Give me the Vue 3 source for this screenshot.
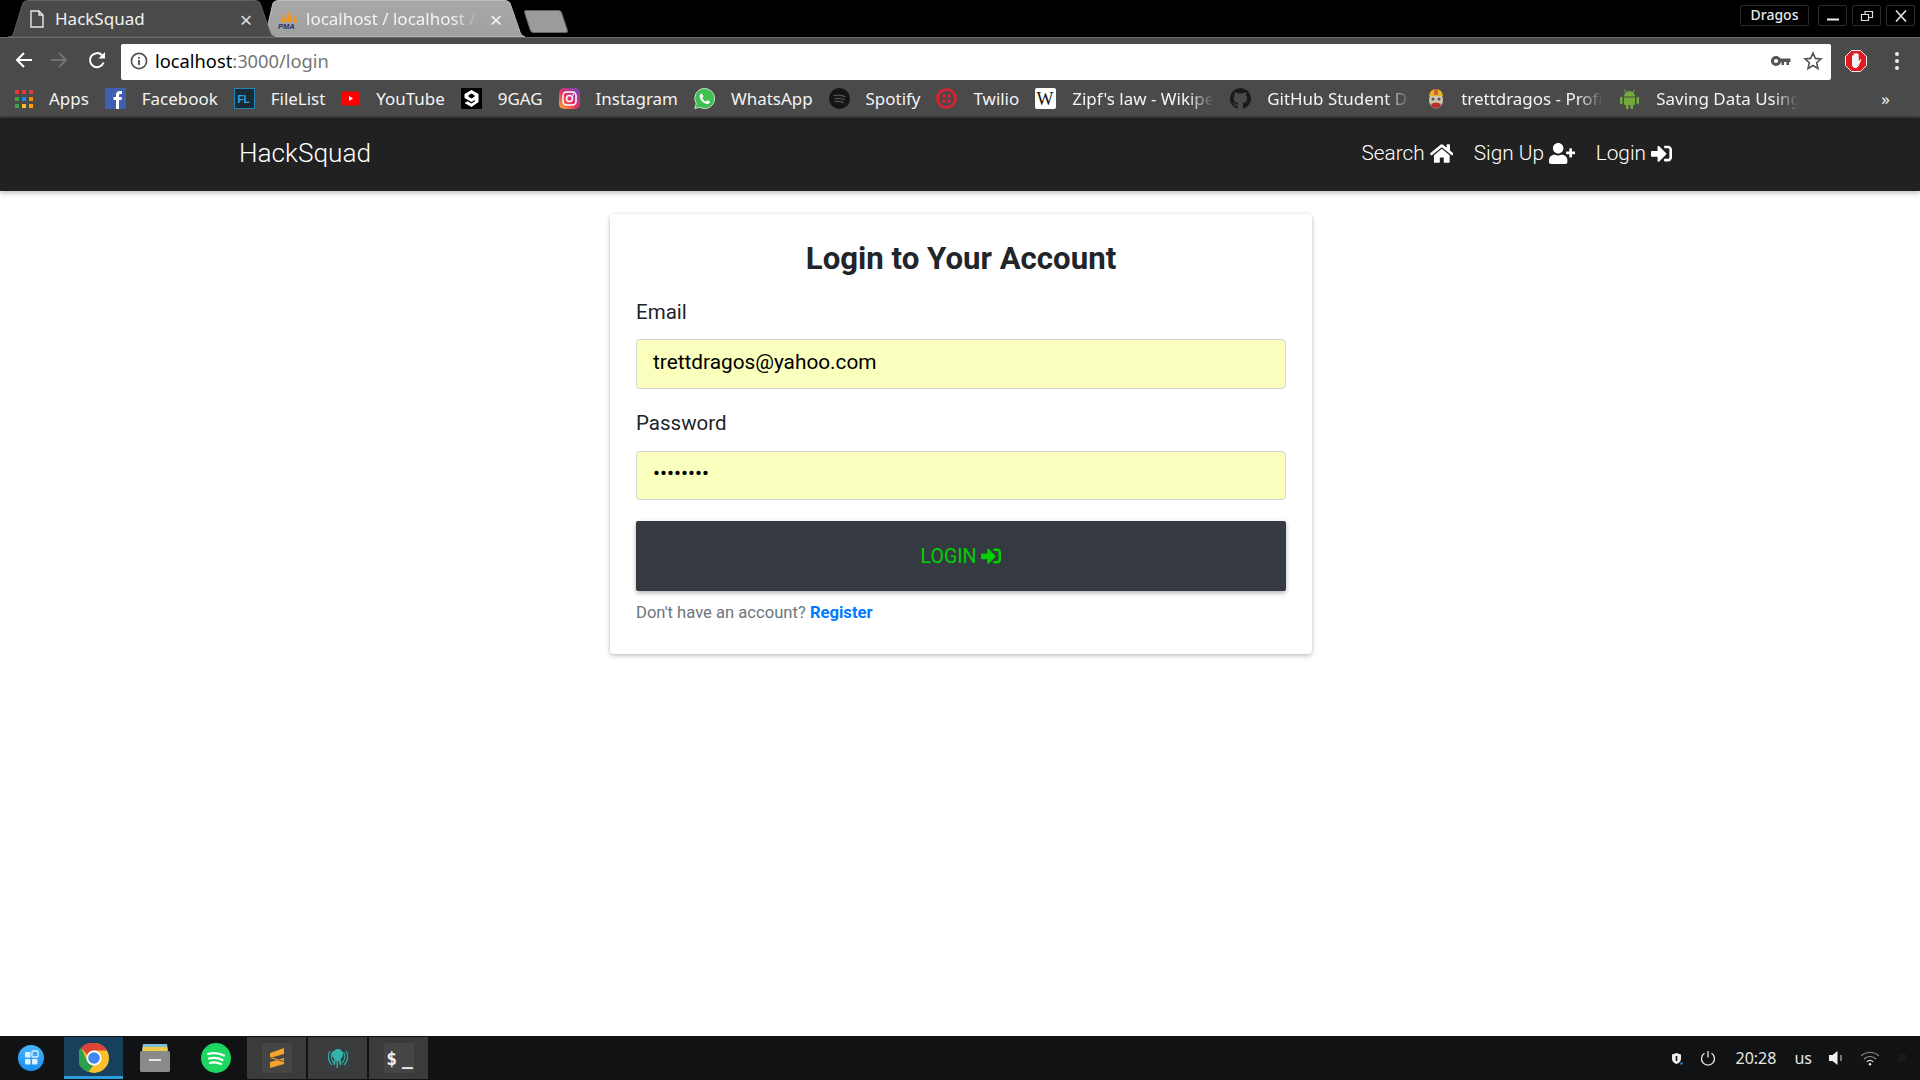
<script setup>
const homePath = 'M280.37 148.26L96 300.11V464a16 16 0 0 0 16 16l112.06-.29a16 16 0 0 0 15.92-16V368a16 16 0 0 1 16-16h64a16 16 0 0 1 16 16v95.64a16 16 0 0 0 16 16.05L464 480a16 16 0 0 0 16-16V300L295.67 148.26a12.19 12.19 0 0 0-15.3 0zM571.6 251.47L488 182.56V44.05a12 12 0 0 0-12-12h-56a12 12 0 0 0-12 12v72.61L318.47 43a48 48 0 0 0-61 0L4.34 251.47a12 12 0 0 0-1.6 16.9l25.5 31A12 12 0 0 0 45.15 301l235.22-193.74a12.19 12.19 0 0 1 15.3 0L530.9 301a12 12 0 0 0 16.9-1.6l25.5-31a12 12 0 0 0-1.7-16.93z'
const userPlusPath = 'M624 208h-64v-64c0-8.8-7.2-16-16-16h-32c-8.8 0-16 7.2-16 16v64h-64c-8.8 0-16 7.2-16 16v32c0 8.8 7.2 16 16 16h64v64c0 8.8 7.2 16 16 16h32c8.8 0 16-7.2 16-16v-64h64c8.8 0 16-7.2 16-16v-32c0-8.8-7.2-16-16-16zm-400 48c70.7 0 128-57.3 128-128S294.7 0 224 0 96 57.3 96 128s57.3 128 128 128zm89.6 32h-16.7c-22.2 10.2-46.9 16-72.9 16s-50.6-5.8-72.9-16h-16.7C60.2 288 0 348.2 0 422.4V464c0 26.5 21.5 48 48 48h352c26.5 0 48-21.5 48-48v-41.6c0-74.2-60.2-134.4-134.4-134.4z'
const signInPath = 'M416 448h-84c-6.6 0-12-5.4-12-12v-40c0-6.6 5.4-12 12-12h84c17.7 0 32-14.3 32-32V160c0-17.7-14.3-32-32-32h-84c-6.6 0-12-5.4-12-12V76c0-6.6 5.4-12 12-12h84c53 0 96 43 96 96v192c0 53-43 96-96 96zm-47-201L201 79c-15-15-41-4.5-41 17v96H24c-13.3 0-24 10.7-24 24v96c0 13.3 10.7 24 24 24h136v96c0 21.5 26 32 41 17l168-168c9.3-9.4 9.3-24.6 0-34z'
const appDots = [
  ['#e53935', 0, 0], ['#e53935', 7, 0], ['#e53935', 14, 0],
  ['#43a047', 0, 7], ['#1e88e5', 7, 7], ['#fb8c00', 14, 7],
  ['#43a047', 0, 14], ['#fbc02d', 7, 14], ['#ffa000', 14, 14],
]
</script>

<template>
  <div class="screen">
    <header class="chrome">
      <div class="tabstrip">
        <div class="tab tab-active">
          <svg class="tab-shape" viewBox="0 0 267 37" preserveAspectRatio="none">
            <path d="M0 37C4 37 5 35 6 32L15 3Q16 1 20 .5L247 .5Q251 1 252 3L262 32Q263 36 267 37Z" fill="#4a4a4a" stroke="#626262" />
          </svg>
          <svg class="tab-file" viewBox="0 0 14 18" width="14" height="18">
            <path d="M1 1h8l4 4v12H1zM9 1v4h4" fill="none" stroke="#e8e8e8" stroke-width="1.4" />
          </svg>
          <span class="tab-title">HackSquad</span>
          <span class="tab-close">×</span>
        </div>
        <div class="tab tab-inactive">
          <svg class="tab-shape" viewBox="0 0 265 37" preserveAspectRatio="none">
            <defs>
              <linearGradient id="inactiveTab" x1="0" y1="0" x2="0" y2="1">
                <stop offset="0" stop-color="#a8a8a8" />
                <stop offset="1" stop-color="#a0a0a0" />
              </linearGradient>
            </defs>
            <path d="M5 37L13 3Q14 1 18 .5L245 .5Q249 1 250 3L260 32Q261 36 265 37Z" fill="url(#inactiveTab)" stroke="#bcbcbc" />
          </svg>
          <svg class="tab-pma" viewBox="0 0 22 22" width="22" height="22">
            <path d="M2 14L7 5v9zM8 14l3-12 3 12zM15 5l5 9h-5z" fill="#f39a1d" />
            <text x="0" y="21" class="pma-text">PMA</text>
          </svg>
          <span class="tab-title tab-title-fade">localhost / localhost /</span>
          <span class="tab-close">×</span>
        </div>
        <div class="newtab"></div>
        <div class="window-controls">
          <span class="win-user">Dragos</span>
          <span class="win-btn">
            <svg viewBox="0 0 16 16" width="16" height="16"><path d="M2 11.5h12" stroke="#eee" stroke-width="2" /></svg>
          </span>
          <span class="win-btn">
            <svg viewBox="0 0 16 16" width="16" height="16"><path d="M2.5 6.5h7v6h-7zM6 6V3.5h7.5v6H10" fill="none" stroke="#ddd" stroke-width="1.2" /></svg>
          </span>
          <span class="win-btn">
            <svg viewBox="0 0 16 16" width="16" height="16"><path d="M3 2.5l10 11M13 2.5l-10 11" stroke="#eee" stroke-width="1.5" /></svg>
          </span>
        </div>
      </div>

      <div class="toolbar">
        <svg class="tool" viewBox="0 0 18 18" width="18" height="18"><path d="M17 9H2M9 2L2 9l7 7" fill="none" stroke="#fff" stroke-width="2" /></svg>
        <svg class="tool" viewBox="0 0 18 18" width="18" height="18"><path d="M1 9h15M9 2l7 7-7 7" fill="none" stroke="#727272" stroke-width="2" /></svg>
        <svg class="tool" viewBox="0 0 18 18" width="18" height="18"><path d="M15.6 11.5A7 7 0 1 1 14 4.2" fill="none" stroke="#fff" stroke-width="2" /><path d="M10.5 7.5H17V1z" fill="#fff" /></svg>
        <div class="omnibox">
          <svg viewBox="0 0 18 18" width="18" height="18">
            <circle cx="9" cy="9" r="7.6" fill="none" stroke="#555" stroke-width="1.7" />
            <path d="M9 8v5M9 5v1.7" stroke="#555" stroke-width="1.9" />
          </svg>
          <span class="url"><span class="url-host">localhost</span>:3000/login</span>
          <span class="omni-spacer"></span>
          <svg viewBox="0 0 20 12" width="20" height="12">
            <circle cx="5" cy="6" r="3.6" fill="none" stroke="#555" stroke-width="3" />
            <path d="M8 3.500h11.500v3.500H18V10h-2.500V7H13v3h-2.500V7H8z" fill="#555" />
          </svg>
          <svg class="star" viewBox="0 0 20 20" width="20" height="20">
            <path d="M10 2l2.3 5.4 5.7.5-4.3 3.8 1.3 5.8-5-3-5 3 1.3-5.8L2 7.900l5.700-.5z" fill="none" stroke="#555" stroke-width="1.6" />
          </svg>
        </div>
        <svg class="abp" viewBox="0 0 22 22" width="22" height="22">
          <path d="M6.500 .5h9l6 6v9l-6 6h-9l-6-6v-9z" fill="#e01b22" stroke="#f0f0f0" />
          <path d="M7 9.500V5.800a.9.900 0 0 1 1.600 0V10V3.900a.9.900 0 0 1 1.700 0V10V3.500a.9.900 0 0 1 1.700 0V10V4.200a.9.900 0 0 1 1.700 0V11l1.300-1.500c.8-.6 1.500 0 1 .9L13.500 16c-.8 1.600-1.800 2-3.200 2-2 0-3.300-1.200-3.300-3.500z" fill="#f2f2f2" />
        </svg>
        <svg class="menu-dots" viewBox="0 0 6 20" width="6" height="20">
          <circle cx="3" cy="3" r="2" fill="#eee" /><circle cx="3" cy="10" r="2" fill="#eee" /><circle cx="3" cy="17" r="2" fill="#eee" />
        </svg>
      </div>

      <nav class="bookmarks">
        <a class="bm bm-apps">
          <svg viewBox="0 0 18 18" width="18" height="18">
            <rect v-for="(d, i) in appDots" :key="i" :x="d[1]" :y="d[2]" width="4" height="4" :fill="d[0]" />
          </svg>
          <span>Apps</span>
        </a>
        <a class="bm">
          <svg viewBox="0 0 21 21" width="21" height="21">
            <rect width="21" height="21" fill="#3f5fb0" />
            <path d="M11 21v-9H8.500V9H11V7c0-2.500 1.500-4 3.800-4H17v3h-1.500c-1 0-1.500.5-1.500 1.500V9h3l-.5 3H14v9z" fill="#fff" />
          </svg>
          <span>Facebook</span>
        </a>
        <a class="bm">
          <svg viewBox="0 0 21 21" width="21" height="21">
            <rect x=".5" y=".5" width="20" height="20" fill="#1c2b33" stroke="#2087b8" />
            <text x="3.500" y="14.500" class="fl-text">FL</text>
          </svg>
          <span>FileList</span>
        </a>
        <a class="bm">
          <svg viewBox="0 0 19 21" width="19" height="21">
            <rect y="3.500" width="19" height="14" rx="3.500" fill="#f00" />
            <path d="M8 8l4 2.500L8 13z" fill="#fff" />
          </svg>
          <span>YouTube</span>
        </a>
        <a class="bm">
          <svg viewBox="0 0 21 21" width="21" height="21">
            <rect width="21" height="21" rx="1" fill="#000" />
            <path d="M10.500 2l7 4v8l-7 5-7-4 3-1.700 4 2.300 3.500-2.300v-1.300l-3.500 2-7-4V6zM10.500 5.500L7.500 7.200v1.600l3 1.700 3-1.700V7.200z" fill="#fff" fill-rule="evenodd" />
          </svg>
          <span>9GAG</span>
        </a>
        <a class="bm">
          <svg viewBox="0 0 21 21" width="21" height="21">
            <defs>
              <linearGradient id="instaGrad" x1="0" y1="1" x2="1" y2="0">
                <stop offset="0" stop-color="#fdb43a" />
                <stop offset=".45" stop-color="#e8305f" />
                <stop offset="1" stop-color="#6a49c8" />
              </linearGradient>
            </defs>
            <rect width="21" height="21" rx="5" fill="url(#instaGrad)" />
            <rect x="4" y="4" width="13" height="13" rx="3.500" fill="none" stroke="#fff" stroke-width="1.500" />
            <circle cx="10.500" cy="10.500" r="3" fill="none" stroke="#fff" stroke-width="1.500" />
            <circle cx="14.300" cy="6.700" r=".9" fill="#fff" />
          </svg>
          <span>Instagram</span>
        </a>
        <a class="bm">
          <svg viewBox="0 0 21 21" width="21" height="21">
            <path d="M10.700 .5a10 10 0 0 0-8.500 15.300L.8 20.500l4.900-1.300A10 10 0 1 0 10.700 .5z" fill="#3fc04f" stroke="#e9f5e9" stroke-width=".8" />
            <path d="M7.300 5.500c-.6 0-1.600 1-1.600 2.700 0 3.500 4.300 7.800 7.600 7.800 1.800 0 2.800-1.200 2.800-2 0-.5-2.300-1.700-2.700-1.700-.4 0-.9 1.200-1.400 1.200-1.200 0-3.600-2.400-3.600-3.500 0-.5 1-1 1-1.500S8.200 5.500 7.300 5.500z" fill="#fff" />
          </svg>
          <span>WhatsApp</span>
        </a>
        <a class="bm">
          <svg viewBox="0 0 21 21" width="21" height="21">
            <circle cx="10.500" cy="10.500" r="10.500" fill="#151515" />
            <path d="M5 7.700c4-1 8-.7 11 1M5.700 10.800c3.500-.8 6.800-.5 9.500 1M6.300 13.700c3-.6 5.500-.4 7.800.9" fill="none" stroke="#555" stroke-width="1.300" stroke-linecap="round" />
          </svg>
          <span>Spotify</span>
        </a>
        <a class="bm">
          <svg viewBox="0 0 21 21" width="21" height="21">
            <circle cx="10.500" cy="10.500" r="9" fill="none" stroke="#e3202f" stroke-width="2.600" />
            <circle cx="8" cy="8" r="1.800" fill="#e3202f" /><circle cx="13" cy="8" r="1.800" fill="#e3202f" />
            <circle cx="8" cy="13" r="1.800" fill="#e3202f" /><circle cx="13" cy="13" r="1.800" fill="#e3202f" />
          </svg>
          <span>Twilio</span>
        </a>
        <a class="bm">
          <svg viewBox="0 0 21 21" width="21" height="21">
            <rect width="21" height="21" rx="2" fill="#fff" />
            <text x="1.500" y="17" class="wiki-text">W</text>
          </svg>
          <span class="fade bm-zipf">Zipf's law - Wikipe</span>
        </a>
        <a class="bm">
          <svg viewBox="0 0 21 21" width="21" height="21">
            <path d="M10.500 0a10.500 10.500 0 0 0-3.300 20.500c.5.100.7-.2.700-.5v-2c-2.900.6-3.500-1.300-3.500-1.300-.5-1.200-1.200-1.500-1.200-1.500-1-.6 0-.6 0-.6 1 .1 1.600 1.100 1.600 1.100.9 1.600 2.400 1.100 3 .9.100-.7.400-1.100.7-1.400-2.300-.3-4.800-1.200-4.800-5.200 0-1.100.4-2 1.100-2.800-.1-.3-.5-1.300.1-2.800 0 0 .9-.3 2.900 1.100a10 10 0 0 1 5.200 0c2-1.400 2.900-1.100 2.900-1.100.6 1.500.2 2.500.1 2.800.7.800 1.100 1.700 1.100 2.800 0 4-2.500 4.900-4.800 5.200.4.300.7 1 .7 1.900V20c0 .3.200.6.700.5A10.500 10.500 0 0 0 10.500 0z" fill="#1a1a1a" />
          </svg>
          <span class="fade bm-github">GitHub Student D</span>
        </a>
        <a class="bm">
          <svg viewBox="0 0 18 21" width="18" height="21">
            <ellipse cx="9" cy="12" rx="7" ry="8.500" fill="#cfc6ae" />
            <path d="M2 8a7 7 0 0 1 14 0z" fill="#e4b52c" />
            <rect x="7" y="1" width="4" height="6" fill="#d2632a" />
            <path d="M4 16q5-3 10 0l-1 3q-4 2-8 0z" fill="#b8312c" />
            <circle cx="6" cy="11" r="1.500" fill="#555" /><circle cx="12" cy="11" r="1.500" fill="#555" />
          </svg>
          <span class="fade bm-trett">trettdragos - Profi</span>
        </a>
        <a class="bm">
          <svg viewBox="0 0 21 21" width="21" height="21">
            <path d="M5 8.500a5.500 5.500 0 0 1 11 0zM5 9.500h11V16a1 1 0 0 1-1 1h-1v3a1 1 0 0 1-2.500 0v-3h-2v3A1 1 0 0 1 7 20v-3H6a1 1 0 0 1-1-1zM1 10a1.200 1.200 0 0 1 2.500 0v5A1.200 1.200 0 0 1 1 15zM17.500 10a1.200 1.200 0 0 1 2.500 0v5a1.200 1.200 0 0 1-2.500 0z" fill="#76a93c" />
            <path d="M7 4.500L5.500 1.500M14 4.500l1.500-3" stroke="#76a93c" stroke-width="1" />
          </svg>
          <span class="fade bm-saving">Saving Data Using</span>
        </a>
        <span class="bm-more">»</span>
      </nav>
    </header>

    <div class="navbar">
      <div class="navbar-inner">
        <a class="brand">HackSquad</a>
        <ul class="nav-links">
          <li>Search
            <svg viewBox="0 0 576 512" width="23.600" height="21"><path :d="homePath" fill="#fff" /></svg>
          </li>
          <li>Sign Up
            <svg viewBox="0 0 640 512" width="26.250" height="21"><path :d="userPlusPath" fill="#fff" /></svg>
          </li>
          <li>Login
            <svg viewBox="0 0 512 512" width="21" height="21"><path :d="signInPath" fill="#fff" /></svg>
          </li>
        </ul>
      </div>
    </div>

    <main class="page">
      <section class="card">
        <h1 class="card-title">Login to Your Account</h1>
        <div class="field-label">Email</div>
        <div class="field field-email">trettdragos@yahoo.com</div>
        <div class="field-label field-label-pass">Password</div>
        <div class="field field-pass">••••••••</div>
        <button class="login-btn">
          LOGIN
          <svg viewBox="0 0 512 512" width="20" height="20"><path :d="signInPath" fill="#00d000" /></svg>
        </button>
        <p class="register-line">Don't have an account? <a class="register">Register</a></p>
      </section>
    </main>

    <footer class="taskbar">
      <div class="task-launch">
        <svg viewBox="0 0 26 26" width="26" height="26">
          <defs>
            <linearGradient id="startGrad" x1="0" y1="0" x2="0" y2="1">
              <stop offset="0" stop-color="#45b6ff" />
              <stop offset="1" stop-color="#1a8cf0" />
            </linearGradient>
          </defs>
          <circle cx="13" cy="13" r="13" fill="url(#startGrad)" />
          <rect x="7" y="7" width="5.500" height="5.500" rx="1" fill="#dff1ff" />
          <rect x="14" y="6" width="6" height="6" rx="1" fill="none" stroke="#dff1ff" stroke-width="1.300" />
          <rect x="7" y="14" width="5.500" height="5.500" rx="1" fill="#dff1ff" />
          <rect x="14" y="14" width="5.500" height="5.500" rx="1" fill="#dff1ff" />
        </svg>
      </div>
      <div class="task-item task-active">
        <svg viewBox="0 0 30 30" width="30" height="30">
          <circle cx="15" cy="15" r="15" fill="#fbc02d" />
          <path d="M15 0a15 15 0 0 1 13 7.500H15A7.500 7.500 0 0 0 8 12L2 4.500A15 15 0 0 1 15 0z" fill="#db4437" />
          <path d="M2 4.500L8.500 18.800A7.500 7.500 0 0 0 14 22.500L9.500 29A15 15 0 0 1 2 4.500z" fill="#2e9e4f" />
          <circle cx="15" cy="15" r="7.500" fill="#fff" />
          <circle cx="15" cy="15" r="5.800" fill="#4285f4" />
        </svg>
      </div>
      <div class="task-item">
        <svg viewBox="0 0 30 28" width="30" height="28">
          <path d="M3 0h24l1 6H2z" fill="#7ec0d8" />
          <path d="M3 3h24l1 5H2z" fill="#f2c94c" />
          <rect y="7" width="30" height="21" rx="1.500" fill="#8a8a8a" />
          <rect x="9" y="15" width="12" height="2" fill="#e8e8e8" />
        </svg>
      </div>
      <div class="task-item">
        <svg viewBox="0 0 30 30" width="30" height="30">
          <circle cx="15" cy="15" r="15" fill="#1ed760" />
          <path d="M7 11c5-1.500 11-1 16 1.500M8 15.500c4.500-1.200 9.500-.8 13.500 1.500M9 20c3.500-1 7.500-.7 11 1" fill="none" stroke="#fff" stroke-width="2.200" stroke-linecap="round" />
        </svg>
      </div>
      <div class="task-item task-open">
        <span class="task-icon-box">
          <svg viewBox="0 0 20 22" width="20" height="22">
            <path d="M17 1v6L3 11V6zM3 11l14 4v-1l-14-4zM3 15l14-4v6L3 21z" fill="#f4a32c" />
          </svg>
        </span>
      </div>
      <div class="task-item task-open">
        <svg viewBox="0 0 30 30" width="30" height="30">
          <circle cx="15" cy="15" r="15" fill="#383e3f" />
          <path d="M15 6c3 0 5 2.500 5 5.500 0 2-1 3.500-2.500 4.500l1 6h-1.800l-.7-4-1 .2V25h-1.400v-6.800l-1-.2-.7 4H10.500l1-6C10 15 9 13.500 9 11.500 9 8.500 12 6 15 6z" fill="#32b3ad" />
          <path d="M7 8a11 11 0 0 0 2 14M23 8a11 11 0 0 1-2 14M9.500 9a9 9 0 0 0 1.500 11M20.500 9a9 9 0 0 1-1.500 11" fill="none" stroke="#32b3ad" stroke-width="1.200" />
        </svg>
      </div>
      <div class="task-item task-open">
        <span class="task-icon-box term-box">$_</span>
      </div>

      <div class="tray">
        <svg class="tray-shield" viewBox="0 0 12 13" width="12" height="13">
          <path d="M5.500 1l4.500 1.500V7c0 2.500-2 4-4.500 5C3 11 1 9.500 1 7V2.500z" fill="#eee" />
          <path d="M5.500 4v5" stroke="#111" stroke-width="1.600" />
          <circle cx="10.500" cy="11.500" r="1.200" fill="#2e88d8" />
        </svg>
        <svg class="tray-power" viewBox="0 0 16 16" width="16" height="16">
          <path d="M4.500 3.200a6.500 6.500 0 1 0 7 0M8 1v6.500" fill="none" stroke="#e8e8e8" stroke-width="1.300" />
        </svg>
        <span class="tray-time">20:28</span>
        <span class="tray-lang">us</span>
        <svg class="tray-vol" viewBox="0 0 15 16" width="15" height="16">
          <path d="M0 5h3.500L8.500 1v14l-5-4H0z" fill="#f0f0f0" />
          <path d="M12 5v6" stroke="#999" stroke-width="1.500" />
        </svg>
        <svg class="tray-wifi" viewBox="0 0 20 15" width="20" height="15">
          <path d="M1 5a13 13 0 0 1 18 0" fill="none" stroke="#777" stroke-width="1.100" />
          <path d="M4 8a8.500 8.500 0 0 1 12 0" fill="none" stroke="#999" stroke-width="1.100" />
          <path d="M6.800 10.800a4.500 4.500 0 0 1 6.400 0" fill="none" stroke="#ddd" stroke-width="1.200" />
          <circle cx="10" cy="13.300" r="1.200" fill="#eee" />
        </svg>
        <span class="tray-dim"></span>
      </div>
    </footer>
  </div>
</template>

<style>
html, body { margin: 0; padding: 0; background: #fff; }
</style>

<style scoped>
.screen {
  width: 1920px;
  height: 1080px;
  display: flex;
  flex-direction: column;
  overflow: hidden;
  background: #fff;
  font-family: Roboto, "Liberation Sans", sans-serif;
}
a { text-decoration: none; }

/* browser chrome */
.chrome { font-family: "Noto Sans", "Open Sans", sans-serif; flex: none; }
.tabstrip {
  height: 37px;
  background: #000;
  display: flex;
  align-items: stretch;
  padding-left: 8px;
}
.tab {
  position: relative;
  height: 37px;
  display: flex;
  align-items: center;
  color: #f2f2f2;
  font-size: 17px;
  flex: none;
}
.tab-shape { position: absolute; inset: 0; width: 100%; height: 100%; }
.tab > *:not(.tab-shape) { position: relative; }
.tab-active { width: 267px; z-index: 2; padding-left: 22px; box-sizing: border-box; }
.tab-inactive { width: 265px; margin-left: -15px; padding-left: 18px; box-sizing: border-box; color: #f4f4f4; }
.tab-file { margin-right: 11px; }
.tab-title { flex: 1; white-space: nowrap; }
.tab-title-fade {
  margin-left: 6px;
  -webkit-mask-image: linear-gradient(to right, #000 84%, transparent 100%);
  mask-image: linear-gradient(to right, #000 84%, transparent 100%);
}
.tab-close { font-size: 22px; color: #dcdcdc; width: 16px; margin-right: 21px; margin-left: 8px; line-height: 1; text-align: center; }
.tab-inactive .tab-close { margin-right: 21px; color: #f0f0f0; }
.pma-text { font: italic bold 7.500px "Liberation Sans", sans-serif; fill: #27306f; }
.newtab {
  width: 36px;
  height: 21px;
  margin: 10px 0 0 2px;
  background: #9b9b9b;
  border: 1px solid #666;
  border-radius: 3px;
  transform: skewX(18deg);
  flex: none;
}
.window-controls {
  margin-left: auto;
  padding-right: 5px;
  padding-top: 5px;
  display: flex;
  gap: 5px;
  align-items: flex-start;
}
.win-user {
  width: 69px;
  height: 21px;
  margin-right: 4px;
  box-sizing: border-box;
  border: 1px solid #2c2c2c;
  border-radius: 2px;
  color: #e8e8e8;
  font-size: 14px;
  font-weight: 500;
  line-height: 18px;
  text-align: center;
}
.win-btn {
  width: 29px;
  height: 21px;
  box-sizing: border-box;
  border: 1px solid #2c2c2c;
  border-radius: 2px;
  display: flex;
  align-items: center;
  justify-content: center;
}

.toolbar {
  height: 43px;
  box-sizing: border-box;
  background: #4a4a4a;
  border-top: 1px solid #6a6a6a;
  display: flex;
  align-items: center;
  padding: 5px 0 0 15px;
}
.tool { margin: -3px 20px 0 0; flex: none; }
.tool:nth-child(1) { margin-right: 17px; }
.tool:nth-child(3) { margin-right: 15px; }
.omnibox {
  width: 1710px;
  height: 36px;
  box-sizing: border-box;
  background: #fff;
  border-radius: 2px;
  display: flex;
  align-items: center;
  padding: 0 8px 2px 9px;
  flex: none;
}
.url { margin-left: 7px; font-size: 18.300px; color: #757575; white-space: nowrap; }
.url-host { color: #000; }
.omni-spacer { flex: 1; }
.star { margin-left: 12px; }
.abp { margin: -2px 0 0 14px; flex: none; }
.menu-dots { margin: -2px 0 0 27px; flex: none; }

.bookmarks {
  height: 38px;
  box-sizing: border-box;
  background: #4a4a4a;
  border-bottom: 2px solid #3a3a3a;
  display: flex;
  align-items: center;
  gap: 16px;
  padding: 1px 0 0 15px;
  color: #f4f4f4;
  font-size: 16.950px;
  white-space: nowrap;
}
.bm { display: flex; align-items: center; gap: 16px; color: #f4f4f4; flex: none; }
.bm svg { flex: none; }
.fade {
  display: block;
  -webkit-mask-image: linear-gradient(to right, #000 82%, transparent 100%);
  mask-image: linear-gradient(to right, #000 82%, transparent 100%);
}
.bm-zipf { width: 142px; }
.bm-github { width: 144px; }
.bm-trett { width: 142px; }
.bm-saving { width: 143px; }
.bm-more { margin-left: auto; margin-right: 30px; font-size: 17px; }

/* navbar */
.navbar {
  height: 73px;
  flex: none;
  background: #212121;
  box-shadow: 0 2px 5px rgba(0, 0, 0, .26);
  position: relative;
}
.navbar-inner {
  width: 1440px;
  height: 100%;
  box-sizing: border-box;
  padding-bottom: 3px;
  margin: 0 auto;
  display: flex;
  align-items: center;
  justify-content: space-between;
  color: #fff;
  font-weight: 300;
}
.brand { font-size: 26.200px; color: #fff; margin-left: -1px; }
.nav-links {
  list-style: none;
  display: flex;
  gap: 20.500px;
  margin: 0 8px 0 0;
  padding: 0;
  font-size: 20.800px;
}
.nav-links li { display: flex; align-items: center; gap: 5px; }

/* card */
.page { flex: 1; display: flex; justify-content: center; align-items: flex-start; padding: 23px 0 0 2px; }
.card {
  width: 702px;
  box-sizing: border-box;
  padding: 26px 26px 29px;
  border-radius: 4px;
  background: #fff;
  box-shadow: 0 2px 5px rgba(0, 0, 0, .22), 0 0 3px rgba(0, 0, 0, .08);
}
.card-title {
  margin: 0 0 19px;
  font-size: 31.200px;
  font-weight: 700;
  line-height: 38px;
  text-align: center;
  color: #212529;
}
.field-label { font-size: 20.500px; line-height: 30px; color: #212529; font-weight: 400; margin-bottom: 12px; }
.field-label-pass { margin-top: 19px; margin-bottom: 13px; }
.field {
  box-sizing: border-box;
  height: 50px;
  border: 1px solid #ced4da;
  border-radius: 4px;
  background: #faffbd;
  padding: 7px 16px 0;
  font-size: 20.800px;
  line-height: 30px;
  color: #000;
}
.field-pass { height: 49px; margin-bottom: 21px; padding-top: 6px; }
.login-btn {
  width: 100%;
  height: 70px;
  border: 0;
  border-radius: 2px;
  background: #343a40;
  color: #00d000;
  font: 400 19.500px Roboto, sans-serif;
  display: flex;
  align-items: center;
  justify-content: center;
  gap: 5px;
  box-shadow: 0 2px 5px rgba(0, 0, 0, .3);
}
.register-line { margin: 10px 0 0; font-size: 16.600px; line-height: 24px; color: #6c757d; }
.register { color: #007bff; font-weight: 700; }

/* taskbar */
.taskbar {
  height: 44px;
  flex: none;
  background: #101214;
  display: flex;
  align-items: stretch;
  font-family: "Noto Sans", "Open Sans", sans-serif;
  padding-left: 1px;
}
.task-launch { width: 61px; margin-right: 2px; display: flex; align-items: center; justify-content: center; padding-right: 1px; box-sizing: border-box; }
.task-item {
  width: 59px;
  height: 42px;
  margin: 1px 2px 1px 0;
  display: flex;
  align-items: center;
  justify-content: center;
  flex: none;
  box-sizing: border-box;
}
.task-active { background: #17405c; border-bottom: 3px solid #2d9cdb; padding-top: 2px; }
.task-open { background: #3b3b3b; }
.task-icon-box {
  width: 30px;
  height: 30px;
  background: #454545;
  border-radius: 2px;
  display: flex;
  align-items: center;
  justify-content: center;
}
.term-box { box-sizing: border-box; padding-left: 7px; color: #f0f0f0; font: 700 18px "DejaVu Sans Mono", monospace; letter-spacing: 5px; }
.tray { margin-left: auto; display: flex; align-items: center; color: #e8e8e8; font-size: 16px; }
.tray-shield { margin-right: 17px; }
.tray-time { margin-left: 20px; }
.tray-lang { margin-left: 18px; }
.tray-vol { margin-left: 17px; }
.tray-wifi { margin-left: 16px; }
.tray-dim { width: 8px; height: 8px; margin: 0 14px 0 18px; background: #1a1a1a; }

.fl-text { font: 700 10px "Liberation Sans", sans-serif; fill: #2ea8e0; }
.wiki-text { font: 400 18px "Liberation Serif", serif; fill: #111; }
</style>
